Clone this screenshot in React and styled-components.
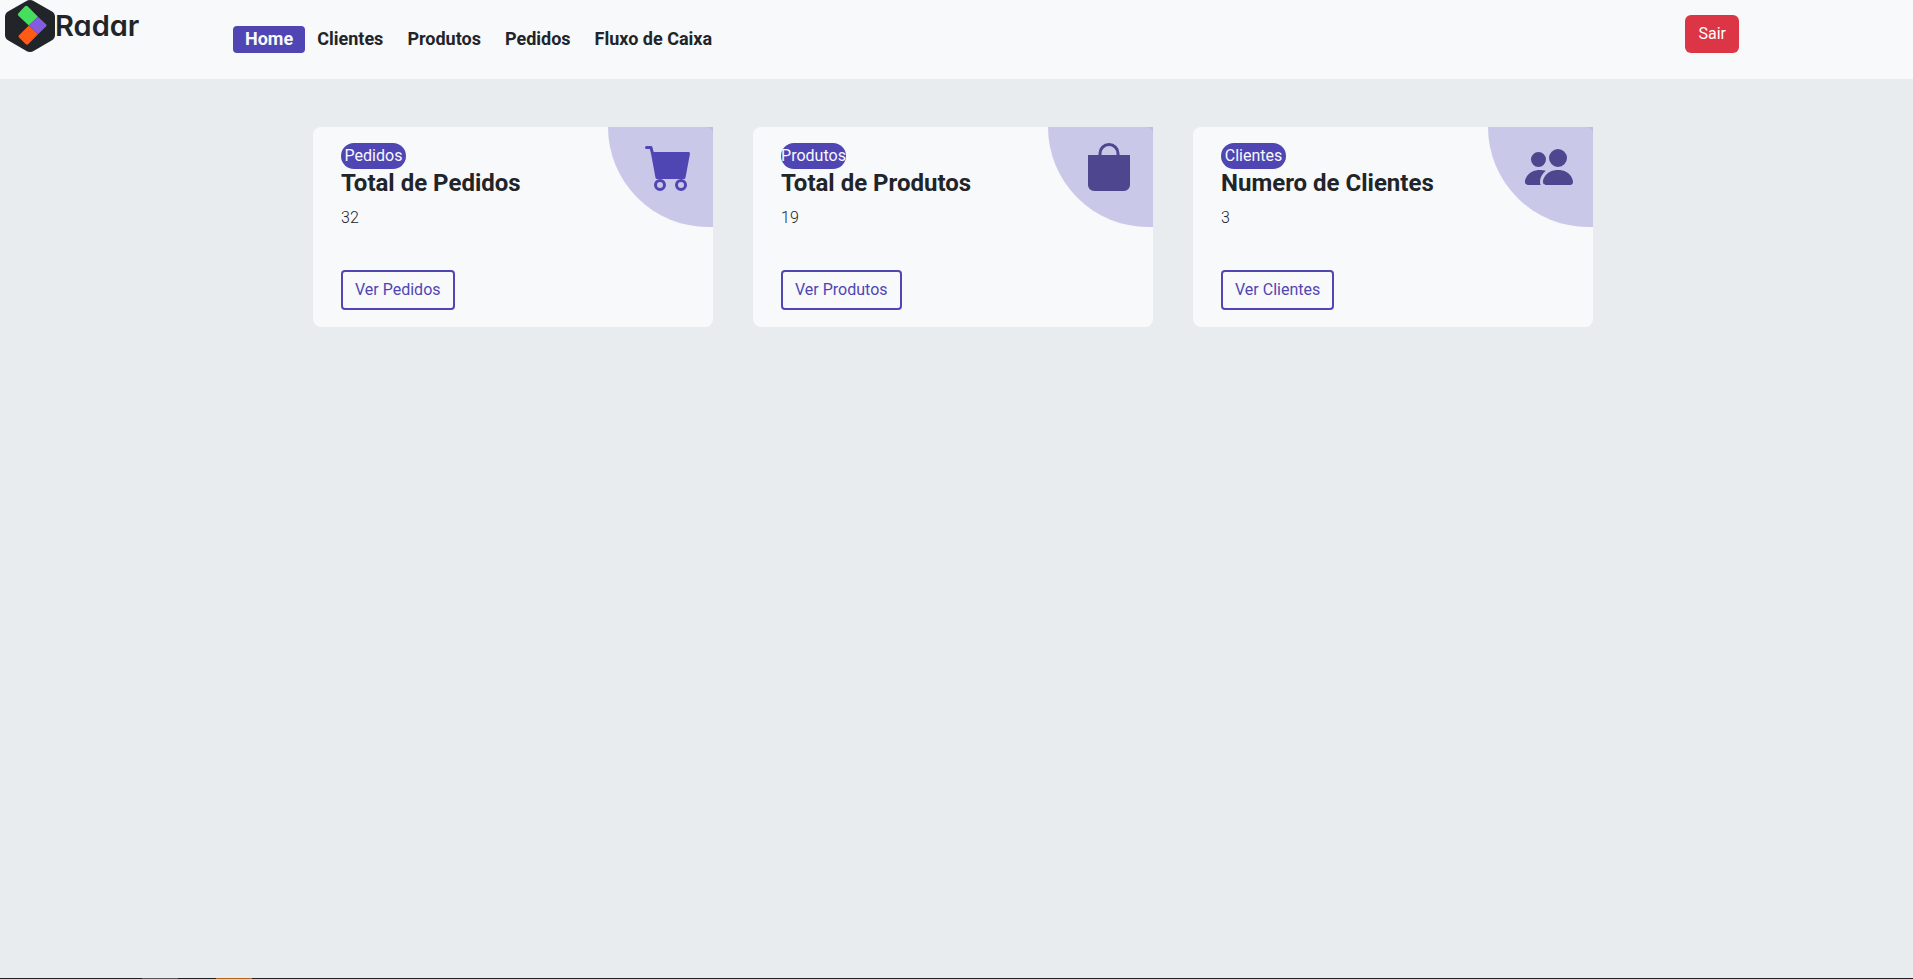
import React from 'react';
import styled, { createGlobalStyle } from 'styled-components';
import { BsCartFill, BsBagFill, BsPeopleFill } from 'react-icons/bs';

const GlobalStyle = createGlobalStyle`
  *, *::before, *::after { box-sizing: border-box; }
  body {
    margin: 0;
    background: #e8ecef;
    color: #212529;
    font-family: Roboto, "Liberation Sans", sans-serif;
    font-size: 16px;
    line-height: 24px;
  }
`;

const Page = styled.div`
  min-height: 100vh;
  display: flex;
  flex-direction: column;
`;

const Header = styled.header`
  display: flex;
  align-items: flex-start;
  height: 79px;
  padding-right: 174px;
  background: #f8f9fb;
`;

const Brand = styled.a`
  display: flex;
  align-items: center;
  width: 233px;
  height: 52px;
  padding-left: 5px;
  color: #212529;
  text-decoration: none;
`;

const BrandName = styled.span`
  font-family: Inter, sans-serif;
  font-size: 29px;
  font-weight: 600;
  line-height: 40px;
  font-feature-settings: "cv11";
`;

const Nav = styled.nav`
  display: flex;
  flex: 1;
  padding-top: 26px;
`;

const NavItem = styled.a`
  padding: 0 12px 2px;
  border-radius: 4px;
  font-size: 18px;
  font-weight: 700;
  line-height: 25px;
  text-decoration: none;
  color: ${({ $active }) => ($active ? '#f8f9fb' : '#212529')};
  background: ${({ $active }) => ($active ? '#4f46b4' : 'transparent')};
`;

const LogoutButton = styled.button`
  margin-top: 15px;
  padding: 7px 13px;
  border: 0;
  border-radius: 6px;
  background: #dc3545;
  color: #fff;
  font: inherit;
`;

const Main = styled.main`
  display: flex;
  flex-wrap: wrap;
  flex: 1;
  justify-content: center;
  align-content: flex-start;
  gap: 40px;
  padding: 48px 7px 48px 0;
`;

const Card = styled.article`
  position: relative;
  display: flex;
  flex-direction: column;
  align-items: flex-start;
  width: 400px;
  min-height: 200px;
  padding: 16px 28px;
  border-radius: 8px;
  background: #f8f9fb;
`;

const Badge = styled.span`
  display: flex;
  align-items: center;
  justify-content: center;
  width: 65px;
  height: 26px;
  border-radius: 13px;
  background: #4f46b4;
  color: #f8f9fb;
`;

const Title = styled.h2`
  margin: 0 0 8px;
  font-size: 24px;
  font-weight: 700;
  line-height: 29px;
`;

const Total = styled.p`
  margin: 0 0 40px;
  font-weight: 300;
`;

const OutlineLink = styled.a`
  padding: 6px 12px;
  border: 2px solid #4f46b4;
  border-radius: 4px;
  color: #4f46b4;
  text-decoration: none;
`;

const Corner = styled.div`
  position: absolute;
  top: 0;
  right: 0;
  width: 105px;
  height: 100px;
  padding: 16px 0 0 37px;
  border-bottom-left-radius: 100px;
  background: rgba(79, 70, 180, 0.27);
  color: ${({ $color }) => $color};
`;

const BottomBar = styled.footer`
  display: flex;
  gap: 38px;
  height: 1px;
  padding-left: 142px;
  background: #1f2024;
`;

const Mark = styled.span`
  width: 36px;
  background: ${({ $color }) => $color};
`;

const links = ['Home', 'Clientes', 'Produtos', 'Pedidos', 'Fluxo de Caixa'];

const cards = [
  { badge: 'Pedidos', title: 'Total de Pedidos', total: 32, Icon: BsCartFill, color: '#4f46b4' },
  { badge: 'Produtos', title: 'Total de Produtos', total: 19, Icon: BsBagFill, color: '#4e468f' },
  { badge: 'Clientes', title: 'Numero de Clientes', total: 3, Icon: BsPeopleFill, color: '#4e468f' },
];

const Logo = () => (
  <svg width="50" height="52" viewBox="0 0 50 52" aria-hidden="true">
    <path
      d="M21 1.2Q25-1.2 29 1.2L47 11.6Q50 13.4 50 17V35Q50 38.4 47 40.2L29 50.8Q25 53.2 21 50.8L3 40.2Q0 38.4 0 35V17Q0 13.4 3 11.6Z"
      fill="#212529"
    />
    <path d="M13.4 13.2L20 6.3Q21.2 5 22.6 6.3L33 16.8L23.8 25.6L13.4 15.7Q12.2 14.5 13.4 13.2Z" fill="#45df5d" />
    <path d="M33 16.8L41 24.3Q42 25.4 41 26.5L33 34.2L23.8 25.6Z" fill="#855ce0" />
    <path d="M23.8 25.6L33 34.2L23.4 44Q22 45.4 20.6 44L14 37.6Q12.8 36.4 14 35.2Z" fill="#ff5a16" />
  </svg>
);

export default function App() {
  return (
    <Page>
      <GlobalStyle />
      <Header>
        <Brand href="#home">
          <Logo />
          <BrandName>Radar</BrandName>
        </Brand>
        <Nav>
          {links.map((label, i) => (
            <NavItem key={label} href="#" $active={i === 0}>
              {label}
            </NavItem>
          ))}
        </Nav>
        <LogoutButton type="button">Sair</LogoutButton>
      </Header>
      <Main>
        {cards.map(({ badge, title, total, Icon, color }) => (
          <Card key={badge}>
            <Badge>{badge}</Badge>
            <Title>{title}</Title>
            <Total>{total}</Total>
            <OutlineLink href="#">Ver {badge}</OutlineLink>
            <Corner $color={color}>
              <Icon size={48} />
            </Corner>
          </Card>
        ))}
      </Main>
      <BottomBar>
        <Mark $color="#55565a" />
        <Mark $color="#b5651d" />
      </BottomBar>
    </Page>
  );
}
